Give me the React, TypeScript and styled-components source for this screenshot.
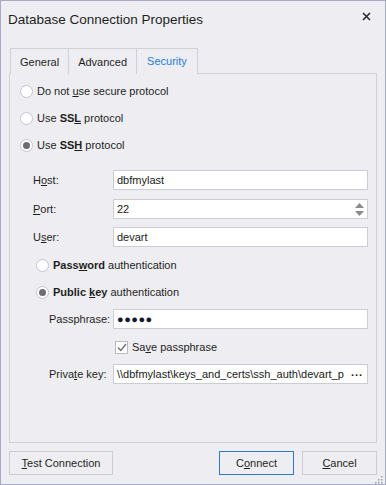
import styled, { createGlobalStyle } from "styled-components";

const GlobalStyle = createGlobalStyle`
  html, body {
    margin: 0;
    padding: 0;
    background: #eeeef2;
  }
  * {
    box-sizing: border-box;
  }
`;

const Window = styled.div`
  width: 386px;
  height: 485px;
  border: 1px solid #a9aac6;
  background: #eeeef2;
  display: flex;
  flex-direction: column;
  font-family: "Liberation Sans", Arial, sans-serif;
  font-size: 11px;
  color: #1e1e1e;
  position: relative;
`;

const TitleBar = styled.div`
  height: 47px;
  display: flex;
  align-items: flex-start;
  justify-content: space-between;
  padding: 10px 14px 0 7px;
`;

const Title = styled.div`
  font-size: 13.5px;
  color: #1e1e1e;
  line-height: 18px;
`;

const CloseButton = styled.div`
  width: 10px;
  height: 10px;
  display: flex;
  align-items: center;
  justify-content: center;
`;

const Tabs = styled.div`
  display: flex;
  margin-left: 9px;
  height: 25px;
`;

const Tab = styled.div<{ $active?: boolean; $first?: boolean }>`
  height: 26px;
  padding: 0 ${(p) => (p.$active ? "10px" : "9px")};
  border: 1px solid #cfd0da;
  border-left: ${(p) => (p.$first ? "1px solid #cfd0da" : "none")};
  border-bottom: ${(p) => (p.$active ? "1px solid #eeeef2" : "none")};
  background: #eeeef2;
  color: ${(p) => (p.$active ? "#1f7bd4" : "#1e1e1e")};
  display: flex;
  align-items: center;
  justify-content: center;
  position: relative;
  z-index: 1;
  font-size: 11px;
`;

const Panel = styled.div`
  margin: 0 8px;
  height: 370px;
  border: 1px solid #cfd0da;
  padding: 7px 0 0 10px;
  display: flex;
  flex-direction: column;
`;

const Row = styled.div<{ $indent?: number; $top?: number }>`
  height: 20px;
  display: flex;
  align-items: center;
  margin-left: ${(p) => p.$indent ?? 0}px;
  margin-top: ${(p) => p.$top ?? 0}px;
`;

const RadioCircle = styled.span<{ $checked?: boolean }>`
  width: 13px;
  height: 13px;
  border-radius: 50%;
  border: 1px solid #c4c5cf;
  background: #ffffff;
  display: flex;
  align-items: center;
  justify-content: center;
  margin-right: 4px;
  flex-shrink: 0;

  &::after {
    content: "";
    display: ${(p) => (p.$checked ? "block" : "none")};
    width: 7px;
    height: 7px;
    border-radius: 50%;
    background: #6d6d72;
  }
`;

const Bold = styled.b`
  font-weight: bold;
`;

const Label = styled.span<{ $width: number }>`
  width: ${(p) => p.$width}px;
  flex-shrink: 0;
`;

const Input = styled.div`
  width: 255px;
  height: 20px;
  border: 1px solid #cbccd6;
  background: #ffffff;
  display: flex;
  align-items: center;
  padding-left: 3px;
  font-size: 11px;
  color: #1a1a1a;
  white-space: nowrap;
  overflow: hidden;
`;

const InputText = styled.span`
  flex: 1;
`;

const Spin = styled.div`
  width: 14px;
  height: 18px;
  display: flex;
  flex-direction: column;
  align-items: center;
  justify-content: center;
  gap: 3px;
  margin-right: 1px;
`;

const Dots = styled.span`
  font-size: 11px;
  letter-spacing: 0.5px;
  color: #101830;
  line-height: 1;
`;

const EllipsisButton = styled.span`
  width: 20px;
  flex-shrink: 0;
  display: flex;
  align-items: center;
  justify-content: center;
  font-weight: bold;
  letter-spacing: 1px;
  padding-bottom: 4px;
  color: #1a1a1a;
`;

const CheckBox = styled.span`
  width: 13px;
  height: 13px;
  border: 1px solid #b9bac4;
  background: #ffffff;
  display: flex;
  align-items: center;
  justify-content: center;
  margin-right: 4px;
`;

const Footer = styled.div`
  flex: 1;
  display: flex;
  align-items: flex-start;
  padding: 8px 8px 0 8px;
  gap: 8px;
`;

const Button = styled.div<{ $default?: boolean; $width: number }>`
  width: ${(p) => p.$width}px;
  height: 24px;
  border: 1px solid ${(p) => (p.$default ? "#2b7bcc" : "#cbccd6")};
  background: #eeeef2;
  display: flex;
  align-items: center;
  justify-content: center;
  font-size: 11px;
  color: #1e1e1e;
`;

const Spacer = styled.div`
  flex: 1;
`;

const Grip = styled.div`
  position: absolute;
  right: 2px;
  bottom: 2px;
  width: 8px;
  height: 8px;
`;

export default function App() {
  return (
    <>
      <GlobalStyle />
      <Window>
        <TitleBar>
          <Title>Database Connection Properties</Title>
          <CloseButton>
            <svg width="9" height="9" viewBox="0 0 9 9">
              <path d="M1 1 L8 8 M8 1 L1 8" stroke="#2a2a2a" strokeWidth="1.6" />
            </svg>
          </CloseButton>
        </TitleBar>
        <Tabs>
          <Tab $first>General</Tab>
          <Tab>Advanced</Tab>
          <Tab $active>Security</Tab>
        </Tabs>
        <Panel>
          <Row>
            <RadioCircle />
            <span>
              Do not <u>u</u>se secure protocol
            </span>
          </Row>
          <Row $top={7}>
            <RadioCircle />
            <span>
              Use <Bold>SS<u>L</u></Bold> protocol
            </span>
          </Row>
          <Row $top={7}>
            <RadioCircle $checked />
            <span>
              Use <Bold>SS<u>H</u></Bold> protocol
            </span>
          </Row>

          <Row $indent={13} $top={15}>
            <Label $width={80}>
              H<u>o</u>st:
            </Label>
            <Input>
              <InputText>dbfmylast</InputText>
            </Input>
          </Row>
          <Row $indent={13} $top={9}>
            <Label $width={80}>
              <u>P</u>ort:
            </Label>
            <Input>
              <InputText>22</InputText>
              <Spin>
                <svg width="9" height="5" viewBox="0 0 9 5">
                  <path d="M0 5 L4.5 0 L9 5 Z" fill="#8a8a90" />
                </svg>
                <svg width="9" height="5" viewBox="0 0 9 5">
                  <path d="M0 0 L9 0 L4.5 5 Z" fill="#8a8a90" />
                </svg>
              </Spin>
            </Input>
          </Row>
          <Row $indent={13} $top={8}>
            <Label $width={80}>
              U<u>s</u>er:
            </Label>
            <Input>
              <InputText>devart</InputText>
            </Input>
          </Row>

          <Row $indent={16} $top={8}>
            <RadioCircle />
            <span>
              <Bold>
                Pass<u>w</u>ord
              </Bold>{" "}
              authentication
            </span>
          </Row>
          <Row $indent={16} $top={7}>
            <RadioCircle $checked />
            <span>
              <Bold>
                Public <u>k</u>ey
              </Bold>{" "}
              authentication
            </span>
          </Row>

          <Row $indent={29} $top={7}>
            <Label $width={64}>Passphrase:</Label>
            <Input>
              <Dots>●●●●●</Dots>
            </Input>
          </Row>
          <Row $indent={95} $top={8}>
            <CheckBox>
              <svg width="10" height="9" viewBox="0 0 10 9">
                <path d="M1 4.5 L3.8 7.5 L9 1" stroke="#707076" strokeWidth="1.4" fill="none" />
              </svg>
            </CheckBox>
            <span>
              Sa<u>v</u>e passphrase
            </span>
          </Row>
          <Row $indent={29} $top={7}>
            <Label $width={64}>
              Priva<u>t</u>e key:
            </Label>
            <Input>
              <InputText>\\dbfmylast\keys_and_certs\ssh_auth\devart_p</InputText>
              <EllipsisButton>...</EllipsisButton>
            </Input>
          </Row>
        </Panel>
        <Footer>
          <Button $width={104}>
            <span>
              <u>T</u>est Connection
            </span>
          </Button>
          <Spacer />
          <Button $width={75} $default>
            <span>
              C<u>o</u>nnect
            </span>
          </Button>
          <Button $width={75}>
            <span>
              <u>C</u>ancel
            </span>
          </Button>
        </Footer>
        <Grip>
          <svg width="8" height="8" viewBox="0 0 8 8">
            <rect x="6" y="0" width="1.5" height="1.5" fill="#a0a0ac" />
            <rect x="3" y="3" width="1.5" height="1.5" fill="#a0a0ac" />
            <rect x="6" y="3" width="1.5" height="1.5" fill="#a0a0ac" />
            <rect x="0" y="6" width="1.5" height="1.5" fill="#a0a0ac" />
            <rect x="3" y="6" width="1.5" height="1.5" fill="#a0a0ac" />
            <rect x="6" y="6" width="1.5" height="1.5" fill="#a0a0ac" />
          </svg>
        </Grip>
      </Window>
    </>
  );
}
